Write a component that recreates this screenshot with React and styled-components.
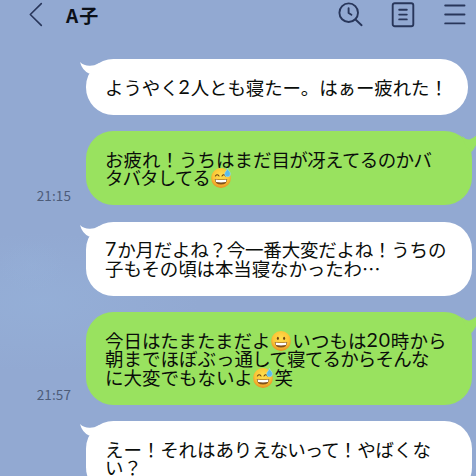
import styled, { createGlobalStyle } from 'styled-components';

const GlobalStyle = createGlobalStyle`
  * {
    box-sizing: border-box;
  }

  body {
    margin: 0;
    overflow: hidden;
  }
`;

const Screen = styled.div`
  width: 476px;
  height: 476px;
  overflow: hidden;
  display: flex;
  flex-direction: column;
  font-family: 'Noto Sans CJK JP', sans-serif;
  background:
    radial-gradient(ellipse 34px 26px at 32px 266px, rgba(150, 178, 218, 0.28), transparent),
    radial-gradient(ellipse 160px 70px at 40px 302px, rgba(150, 178, 218, 0.6), transparent),
    #92a9d2;
`;

const Header = styled.header`
  height: 59px;
  flex-shrink: 0;
  display: flex;
  align-items: flex-start;
  padding: 2px 10px 0 29px;
`;

const Title = styled.h1`
  margin: 0 0 0 23px;
  flex: 1;
  font-size: 19px;
  line-height: 25px;
  letter-spacing: 1px;
  font-weight: 700;
  color: #0c1018;
`;

const Actions = styled.div`
  display: flex;
  gap: 28px;
`;

const Icon = styled.svg`
  display: block;
  fill: none;
  stroke: #28365a;
  stroke-width: 1.9;
  stroke-linecap: round;
  stroke-linejoin: round;
`;

const Messages = styled.main`
  display: flex;
  flex-direction: column;
  gap: 16.5px;
`;

const Row = styled.div`
  display: flex;
  align-items: flex-end;
  flex-shrink: 0;
`;

const Time = styled.time`
  width: 86px;
  padding: 0 15px 0.5px 0;
  text-align: right;
  font-size: 13.5px;
  line-height: 20px;
  letter-spacing: 0.1px;
  color: #4d5c79;
`;

const Bubble = styled.div`
  position: relative;
  width: ${({ $width }) => $width || 386}px;
  padding: 18.5px 0 18.5px 19px;
  border-radius: 27.5px;
  background: ${({ $mine }) => ($mine ? '#99e25f' : '#fff')};
`;

const Tail = styled.svg`
  position: absolute;
  top: 0;
  ${({ $mine }) => ($mine ? 'right: -10px;' : 'left: -7px;')}
  fill: ${({ $mine }) => ($mine ? '#99e25f' : '#fff')};
`;

const Line = styled.div`
  height: 18.5px;
  display: flex;
  white-space: pre;
  font-size: 18.5px;
  line-height: 18.5px;
  color: #0a0d0a;
`;

const Run = styled.span`
  letter-spacing: ${({ $tracking }) => $tracking || 0}px;
`;

const Digits = styled.span`
  font-family: Lato, 'Noto Sans CJK JP', sans-serif;
  font-size: 19.5px;
  letter-spacing: 0.8px;
`;

const Face = styled.svg`
  width: 20px;
  height: 20px;
  margin: 0 1px 0 0.8px;
  flex-shrink: 0;
`;

const Emoji = ({ sweat }) => (
  <Face viewBox="0 0 20 20">
    <defs>
      <radialGradient id="face" cx="50%" cy="38%" r="62%">
        <stop offset="0" stopColor="#ffe04f" />
        <stop offset="0.65" stopColor="#fcc536" />
        <stop offset="1" stopColor="#ea8f22" />
      </radialGradient>
    </defs>
    <circle cx="10" cy="10" r="9.9" fill="url(#face)" />
    {sweat ? (
      <g fill="none" stroke="#6b4410" strokeWidth="1.1" strokeLinecap="round">
        <path d="M4.4 8q1.8-2.4 3.6 0M11 8q1.8-2.4 3.6 0" />
      </g>
    ) : (
      <g fill="#6b4410">
        <ellipse cx="6.9" cy="7.3" rx="1" ry="1.6" />
        <ellipse cx="13.1" cy="7.3" rx="1" ry="1.6" />
      </g>
    )}
    <path d="M3.8 10.9q6.2 1.2 12.4 0q0 5.6-6.2 5.6t-6.2-5.6z" fill="#80501a" />
    <path d="M4.5 11.5q5.5 1 11 0l-.5 2.5q-5 .8-10 0z" fill="#fff" />
    {sweat && (
      <path
        d="M16.5.4c-.5 2-2.8 3.5-2.8 5.5a2.8 2.8 0 0 0 5.7 0c0-2-2.3-3.5-2.9-5.5z"
        fill="#5bbcec"
        stroke="#a7e3f8"
        strokeWidth=".5"
      />
    )}
  </Face>
);

// every line is a list of runs: [text, tracking]
const messages = [
  { width: 382, lines: [[['ようやく2人とも寝たー。はぁー疲れた！', -0.12]]] },
  {
    mine: true,
    time: '21:15',
    lines: [
      [
        ['お疲れ！うちはまだ', 0],
        ['目が冴えてるのかバ', -0.65],
      ],
      [['タバタしてる😅', -0.95]],
    ],
  },
  {
    lines: [
      [['7か月だよね？今一番大変だよね！うちの', -0.22]],
      [['子もその頃は本当寝なかったわ…', -0.12]],
    ],
  },
  {
    mine: true,
    time: '21:57',
    lines: [
      [['今日はたまたまだよ😀いつもは20時から', 0.06]],
      [
        ['朝までほぼぶっ', 0],
        ['通して寝てるからそんな', -0.8],
      ],
      [['に大変でもないよ😅笑', 0]],
    ],
  },
  {
    lines: [
      [
        ['えー！それはあり', -0.1],
        ['えないって', -1],
        ['！やばくな', -0.1],
      ],
      [['い？', 0]],
    ],
  },
];

const renderRun = ([text, tracking]) =>
  text
    .split(/(😅|😀|\d+)/u)
    .filter(Boolean)
    .map((part, index) => {
      if (part === '😅') return <Emoji key={index} sweat />;
      if (part === '😀') return <Emoji key={index} />;
      if (/^\d+$/.test(part)) return <Digits key={index}>{part}</Digits>;
      return (
        <Run key={index} $tracking={tracking}>
          {part}
        </Run>
      );
    });

const Message = ({ message }) => (
  <Row>
    <Time>{message.time}</Time>
    <Bubble $mine={message.mine} $width={message.width}>
      {message.mine ? (
        <Tail $mine width="20" height="24" viewBox="0 0 20 24">
          <path d="M0 5Q4 9 7.5 8.5Q12 7 17 2Q17 12 9.5 21L4 16Z" />
        </Tail>
      ) : (
        <Tail width="22" height="24" viewBox="0 0 22 24">
          <path d="M1 3Q5 7 11 6.8Q15 6.8 20 4.2L18 14L10 14.6Q3 11 1 3Z" />
        </Tail>
      )}
      {message.lines.map((line) => (
        <Line key={line[0][0]}>{line.map(renderRun)}</Line>
      ))}
    </Bubble>
  </Row>
);

const App = () => {
  return (
    <>
      <GlobalStyle />
      <Screen>
        <Header>
          <Icon width="14" height="26" viewBox="0 0 14 26">
            <path d="M12.3 1.6L1.3 12.5L12.3 23.4" strokeWidth="1.6" />
          </Icon>
          <Title>A子</Title>
          <Actions>
            <Icon width="25" height="26" viewBox="0 0 25 26">
              <circle cx="10.7" cy="10.7" r="9.3" />
              <path d="M17.5 17.5L23.6 23.2M10.6 6.2v4.8l2.8 1.7" />
            </Icon>
            <Icon width="25" height="26" viewBox="0 0 25 26">
              <rect x="1.7" y="1.2" width="20.6" height="23" rx="2" />
              <path d="M8.2 7.8h7.6M8.2 12.6h7.6M8.2 17.4h7.6" />
            </Icon>
            <Icon width="22" height="26" viewBox="0 0 22 26">
              <path d="M1.2 3.5h19.3M1.2 12.5h19.3M1.2 21.4h19.3" />
            </Icon>
          </Actions>
        </Header>
        <Messages>
          {messages.map((message, index) => (
            <Message key={index} message={message} />
          ))}
        </Messages>
      </Screen>
    </>
  );
};

export default App;
